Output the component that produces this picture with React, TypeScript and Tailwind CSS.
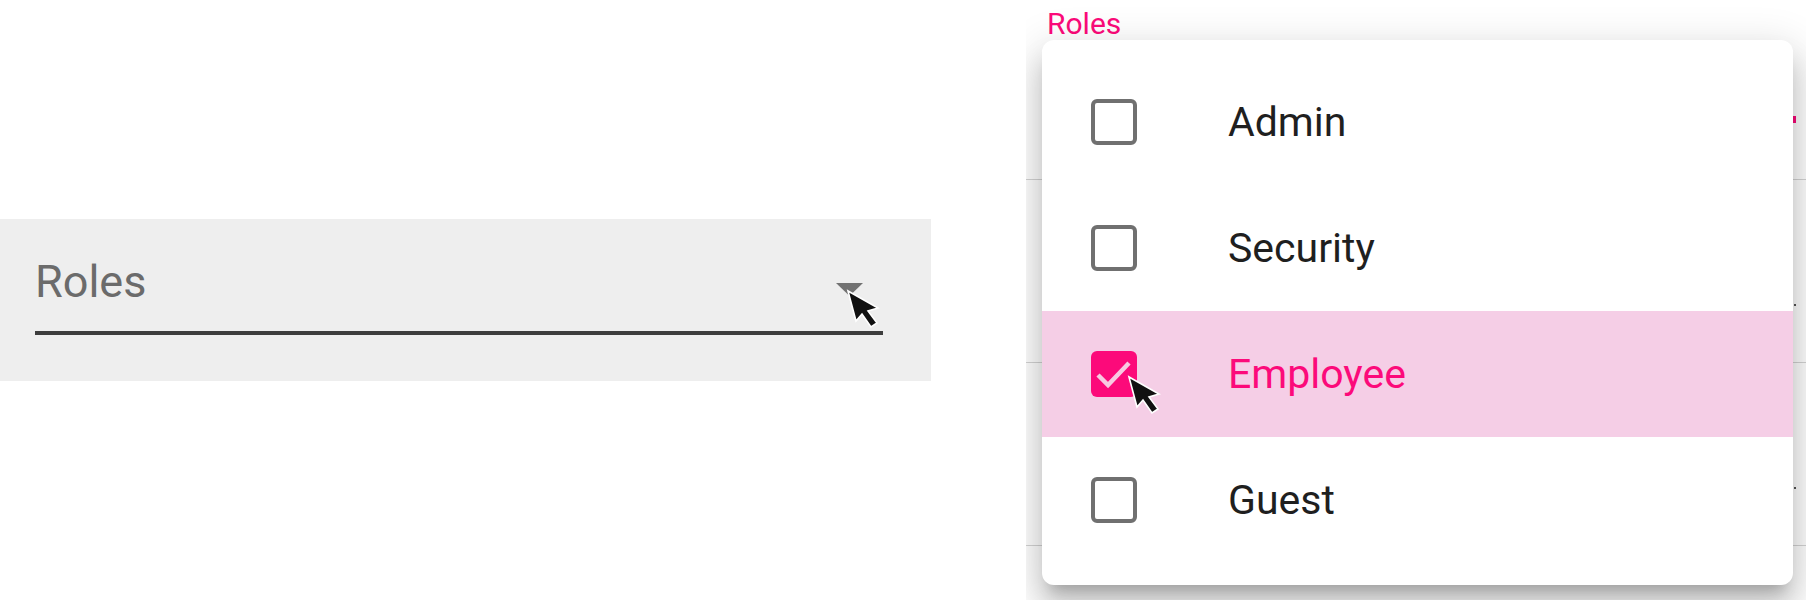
import React from "react";

const PINK = "#fc0a7a";

function Cursor({ className }: { className: string }) {
    return (
        <svg
            width="36"
            height="42"
            viewBox="0 0 36 42"
            className={className}
        >
            <path
                d="M2 2 L10 32 L16 25 L25 38 L31 34 L22 22 L32 19 Z"
                fill="#111"
                stroke="#fff"
                strokeWidth="1.6"
                strokeLinejoin="miter"
            />
        </svg>
    );
}

function Box({ checked }: { checked?: boolean }) {
    if (checked) {
        return (
            <div className="w-[46px] h-[46px] rounded-[6px] bg-[#fc0a7a] flex items-center justify-center shrink-0">
                <svg width="46" height="46" viewBox="0 0 46 46">
                    <path
                        d="M7 24 L17 34 L38 12"
                        fill="none"
                        stroke="#f8c9e1"
                        strokeWidth="4.5"
                    />
                </svg>
            </div>
        );
    }
    return <div className="w-[46px] h-[46px] rounded-[6px] border-[4px] border-[#707070] shrink-0" />;
}

const roles = [
    { name: "Admin", checked: false },
    { name: "Security", checked: false },
    { name: "Employee", checked: true },
    { name: "Guest", checked: false },
];

export default function App() {
    return (
        <div
            className="w-[1806px] h-[600px] bg-white flex overflow-hidden"
            style={{ fontFamily: "Roboto, 'Noto Sans', sans-serif" }}
        >
            {/* closed select */}
            <div className="w-[931px] shrink-0 pt-[219px]">
                <div className="relative h-[162px] bg-[#eeeeee] pl-[35px] pr-[48px] pt-[36px]">
                    <div className="flex items-start">
                        <span className="flex-1 text-[45px] leading-[53px] text-[#6b6b6b]">Roles</span>
                        <svg width="27" height="13" viewBox="0 0 27 13" className="mt-[28px] mr-[20px]">
                            <path d="M0 0 L27 0 L13.5 13 Z" fill="#727272" />
                        </svg>
                    </div>
                    <div className="mt-[23px] h-[4px] bg-[#3d3d3d]" />
                    <Cursor className="absolute left-[846px] top-[70px]" />
                </div>
            </div>

            {/* open menu */}
            <div className="relative ml-[95px] w-[780px] h-[600px] shrink-0 overflow-hidden bg-white">
                <div className="pl-[21px] pt-[6px] h-[41px]">
                    <span className="block text-[30px] leading-[35px]" style={{ color: PINK }}>
                        Roles
                    </span>
                </div>
                <div className="h-[139px] border-b border-[#d4d4d4] flex justify-end pr-[10px]">
                    <div className="mt-[75px] w-[3px] h-[7px] bg-[#fc0a7a]" />
                </div>
                <div className="h-[183px] border-b border-[#d4d4d4] flex justify-end pr-[10px]">
                    <div className="mt-[124px] w-[2px] h-[2px] bg-[#555]" />
                </div>
                <div className="h-[183px] border-b border-[#d4d4d4] flex justify-end pr-[10px]">
                    <div className="mt-[124px] w-[2px] h-[2px] bg-[#555]" />
                </div>

                <div className="absolute left-[16px] top-[40px] w-[751px] h-[545px] bg-white rounded-[12px] pt-[19px] pb-[20px] shadow-[0_14px_14px_-9px_rgba(0,0,0,0.2),0_23px_29px_3px_rgba(0,0,0,0.14),0_9px_40px_6px_rgba(0,0,0,0.12)]">
                    {roles.map((r) => (
                        <div
                            key={r.name}
                            className={
                                "relative h-[126px] flex items-center pl-[49px] " +
                                (r.checked ? "bg-[#f5cee6]" : "")
                            }
                        >
                            <Box checked={r.checked} />
                            <span
                                className="ml-[91px] text-[41px] leading-[48px]"
                                style={{ color: r.checked ? PINK : "#1f1f1f" }}
                            >
                                {r.name}
                            </span>
                            {r.checked && <Cursor className="absolute left-[85px] top-[64px]" />}
                        </div>
                    ))}
                </div>
            </div>
        </div>
    );
}
